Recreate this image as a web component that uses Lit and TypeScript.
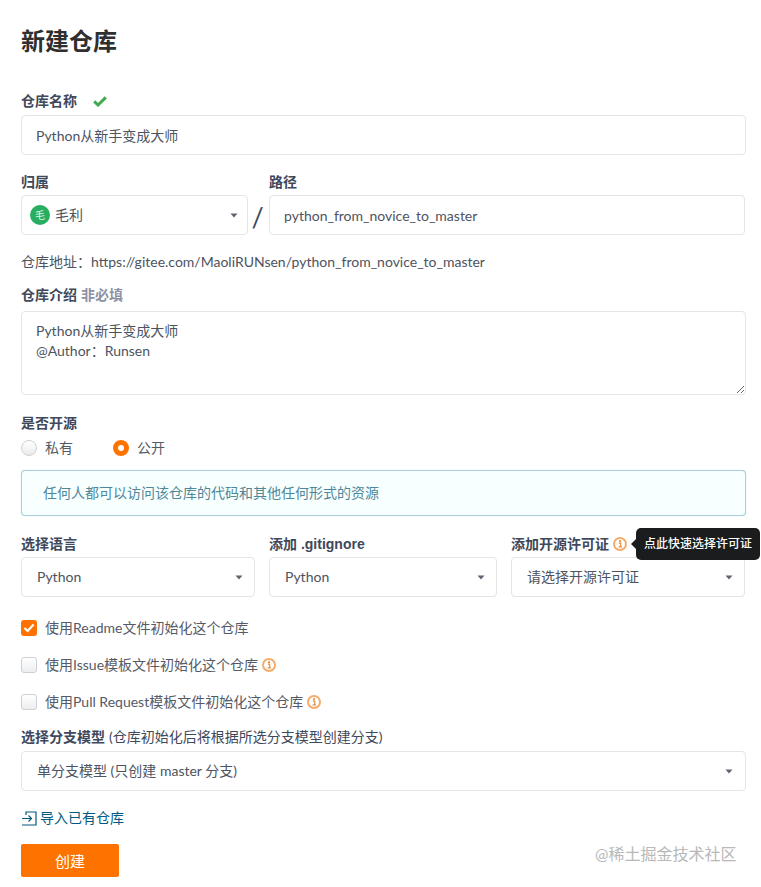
import { LitElement, html, css } from "lit";
import { customElement } from "lit/decorators.js";

const info = html`<svg class="info" viewBox="0 0 14 14" width="14" height="14" aria-hidden="true">
  <circle cx="7" cy="7" r="6" fill="#fff" stroke="#f4ac6c" stroke-width="2"></circle>
  <circle cx="7" cy="4.2" r="1.1" fill="#e58f3e"></circle>
  <path d="M5.8 6.2H7.7V9.7M5.6 9.9H9" fill="none" stroke="#e58f3e" stroke-width="1.2"></path>
</svg>`;

const caret = html`<svg class="caret" viewBox="0 0 8 5" width="8" height="5" aria-hidden="true"><path d="M0.5 0.5H7.5L4 4.5Z" fill="#5f6470"></path></svg>`;

@customElement("app-root")
export class AppRoot extends LitElement {
  static styles = css`
    :host {
      display: block;
      position: relative;
      box-sizing: border-box;
      width: 761px;
      height: 887px;
      padding: 25px 15px 0 21px;
      background: #fff;
      overflow: hidden;
      font: 14px/20px Lato, "Noto Sans CJK SC", sans-serif;
      color: #40485b;
    }
    * { box-sizing: border-box; }
    h1 {
      margin: 0 0 34px;
      font-size: 24px;
      line-height: 32px;
      font-weight: 700;
      color: #2f2f2f;
    }
    .label {
      display: flex;
      align-items: center;
      height: 20px;
      margin-bottom: 4px;
      font-family: "Liberation Sans", "Noto Sans CJK SC", sans-serif;
      font-weight: 700;
      color: #40485b;
      white-space: pre;
    }
    .label .hint { color: #8c92a4; margin-left: 4px; }
    .label .note { font: 400 14px/20px Lato, "Noto Sans CJK SC", sans-serif; }
    .check { margin-left: 16px; }
    input, textarea, .select {
      display: block;
      width: 100%;
      border: 1px solid #e3e5e8;
      border-radius: 4px;
      background: #fff;
      font: inherit;
      color: #4d5360;
      outline: none;
      margin: 0;
    }
    input, .select { height: 40px; padding: 0 14px; }
    .select {
      display: flex;
      align-items: center;
      justify-content: space-between;
      padding: 0 15px 0 15px;
    }
    .name { margin-bottom: 17px; }
    .owner-row {
      display: grid;
      grid-template-columns: 227px 21px 476px;
      margin-bottom: 17px;
    }
    .owner-row .label { margin-bottom: 3px; }
    .slash {
      align-self: end;
      height: 40px;
      margin-right: 2px;
      font-size: 27px;
      line-height: 43px;
      text-align: center;
      font-weight: 400;
      color: #40485b;
    }
    .who { display: flex; align-items: center; gap: 5px; margin-left: -7px; }
    .avatar {
      width: 20px;
      height: 20px;
      border-radius: 50%;
      background: #27ae60;
      color: #dff5e8;
      font-size: 10px;
      line-height: 20px;
      text-align: center;
    }
    .owner-row .select { padding-right: 9px; }
    .address { margin-bottom: 13px; color: #4d5360; }
    .desc-label { margin-bottom: 6px; }
    textarea {
      height: 84px;
      padding: 9px 14px;
      resize: vertical;
      margin-bottom: 18px;
      line-height: 20px;
    }
    .sub { margin-bottom: 5px; }
    .radios {
      display: flex;
      gap: 40px;
      height: 20px;
      margin-bottom: 12px;
    }
    .radio { display: flex; align-items: center; gap: 8px; color: #555a66; }
    .dot {
      width: 16px;
      height: 16px;
      border-radius: 50%;
      border: 1px solid #cfd0d3;
      background: linear-gradient(#fff, #e9ebed);
    }
    .dot.on {
      background: #fff;
      border: 5px solid #fe7300;
    }
    .message {
      height: 46px;
      padding: 0 21px;
      display: flex;
      align-items: center;
      background: #f8ffff;
      border: 1px solid #a9d0da;
      box-shadow: 0 0 1px #a9d0da;
      border-radius: 4px;
      color: #4f8799;
      margin-bottom: 18px;
    }
    .langs {
      display: grid;
      grid-template-columns: 234px 228px 234px;
      column-gap: 14px;
      width: 724px;
      margin-bottom: 21px;
    }
    .langs .label { margin-bottom: 3px; }
    .langs .select { padding-right: 11px; }
    .info { margin-left: 4px; flex: none; }
    .checks { display: flex; flex-direction: column; gap: 17px; margin-bottom: 15px; }
    .cb { display: flex; align-items: center; height: 20px; gap: 8px; color: #555a66; }
    .box {
      flex: none;
      width: 16px;
      height: 16px;
      border: 1px solid #cfd0d3;
      border-radius: 3px;
      background: linear-gradient(#fff, #eceef0);
    }
    .box.on { border: 0; background: #fe7300; display: flex; align-items: center; justify-content: center; }
    .cb .info { margin-left: -4px; }
    .select.branch { margin-bottom: 17px; padding-right: 12px; }
    .import {
      display: flex;
      align-items: center;
      gap: 3px;
      height: 20px;
      color: #005980;
      margin-bottom: 16px;
    }
    .create {
      display: block;
      width: 98px;
      height: 33px;
      padding: 0;
      border: 0;
      border-radius: 2px;
      background: #fe7300;
      color: #fff;
      font: inherit;
      font-size: 15px;
    }
    .tooltip {
      position: absolute;
      left: 636px;
      top: 528px;
      width: 124px;
      height: 32px;
      border-radius: 5px;
      background: #1b1c1d;
      color: #fff;
      font-size: 12px;
      font-weight: 500;
      line-height: 32px;
      text-align: center;
      white-space: nowrap;
    }
    .tooltip::before {
      content: "";
      position: absolute;
      left: -5px;
      top: 11px;
      border-style: solid;
      border-width: 5px 5px 5px 0;
      border-color: transparent #1b1c1d transparent transparent;
    }
    .mark {
      position: absolute;
      left: 595px;
      top: 843px;
      font-size: 16px;
      line-height: 22px;
      color: #b8b8b8;
      white-space: nowrap;
    }
  `;

  render() {
    return html`
      <h1>新建仓库</h1>
      <div class="label">仓库名称<svg class="check" viewBox="0 0 14 11" width="14" height="11" aria-hidden="true"><path d="M1.2 5.4L5 9L12.8 1.4" fill="none" stroke="#43a94f" stroke-width="3"></path></svg></div>
      <input class="name" .value=${"Python从新手变成大师"} />
      <div class="owner-row">
        <div>
          <div class="label">归属</div>
          <div class="select">
            <span class="who"><span class="avatar">毛</span>毛利</span>${caret}
          </div>
        </div>
        <div class="slash">/</div>
        <div>
          <div class="label">路径</div>
          <input .value=${"python_from_novice_to_master"} />
        </div>
      </div>
      <div class="address">仓库地址：https://gitee.com/MaoliRUNsen/python_from_novice_to_master</div>
      <div class="label desc-label">仓库介绍<span class="hint">非必填</span></div>
      <textarea .value=${"Python从新手变成大师\n@Author：Runsen"}></textarea>
      <div class="label sub">是否开源</div>
      <div class="radios">
        <div class="radio"><span class="dot"></span>私有</div>
        <div class="radio"><span class="dot on"></span>公开</div>
      </div>
      <div class="message">任何人都可以访问该仓库的代码和其他任何形式的资源</div>
      <div class="langs">
        <div>
          <div class="label">选择语言</div>
          <div class="select">Python${caret}</div>
        </div>
        <div>
          <div class="label">添加 .gitignore</div>
          <div class="select">Python${caret}</div>
        </div>
        <div>
          <div class="label">添加开源许可证${info}</div>
          <div class="select">请选择开源许可证${caret}</div>
        </div>
      </div>
      <div class="checks">
        <div class="cb"><span class="box on"><svg viewBox="0 0 12 10" width="12" height="10" aria-hidden="true"><path d="M1.4 5L4.6 8L10.6 1.6" fill="none" stroke="#fff" stroke-width="2.2"></path></svg></span>使用Readme文件初始化这个仓库</div>
        <div class="cb"><span class="box"></span>使用Issue模板文件初始化这个仓库${info}</div>
        <div class="cb"><span class="box"></span>使用Pull Request模板文件初始化这个仓库${info}</div>
      </div>
      <div class="label">选择分支模型 <span class="note">(仓库初始化后将根据所选分支模型创建分支)</span></div>
      <div class="select branch">单分支模型 (只创建 master 分支)${caret}</div>
      <div class="import"><svg viewBox="0 0 16 15" width="16" height="15" aria-hidden="true"><path d="M5 4V1H15V14H1M1 7.5H10.5M7.5 4.5L10.5 7.5L7.5 10.5" fill="none" stroke="#005980" stroke-width="1.2"></path></svg>导入已有仓库</div>
      <button class="create">创建</button>
      <div class="tooltip">点此快速选择许可证</div>
      <div class="mark">@稀土掘金技术社区</div>
    `;
  }
}
